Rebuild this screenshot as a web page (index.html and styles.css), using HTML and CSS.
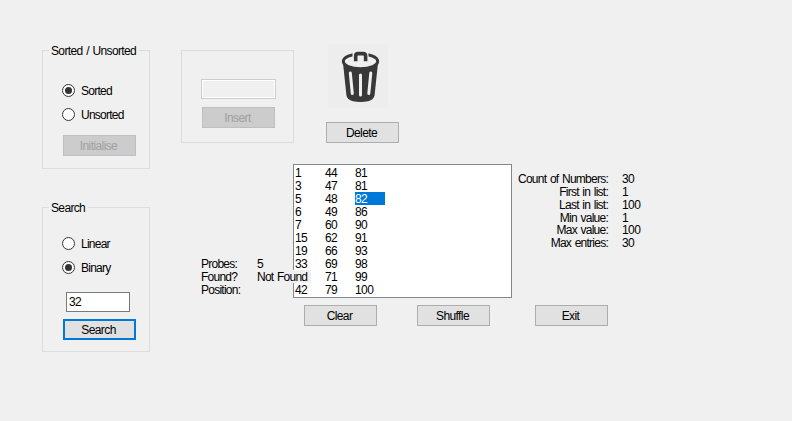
FILE: index.html
```html
<!DOCTYPE html>
<html lang="en">
<head>
<meta charset="utf-8">
<title>Search and Sort</title>
<link rel="stylesheet" href="styles.css">
</head>
<body>
<main class="form">
  <div class="sidebar">
    <section class="group group-sort">
      <h2 class="legend">Sorted / Unsorted</h2>
      <div class="radio"><span class="dot on"></span><span class="caption">Sorted</span></div>
      <div class="radio"><span class="dot"></span><span class="caption">Unsorted</span></div>
      <button class="btn" disabled>Initialise</button>
    </section>
    <section class="group group-search">
      <h2 class="legend">Search</h2>
      <div class="radio"><span class="dot"></span><span class="caption">Linear</span></div>
      <div class="radio"><span class="dot on"></span><span class="caption">Binary</span></div>
      <div class="field">32</div>
      <button class="btn default">Search</button>
    </section>
  </div>
  <div class="content">
    <div class="top">
      <section class="group group-insert">
        <div class="field disabled"></div>
        <button class="btn" disabled>Insert</button>
      </section>
      <div class="delete">
        <div class="bin">
          <svg width="60" height="64" viewBox="0 0 60 64">
            <defs>
              <pattern id="weave" width="3" height="3" patternUnits="userSpaceOnUse">
                <path d="M0 3L3 0" stroke="#eaeaea" stroke-width=".7"/>
              </pattern>
            </defs>
            <rect width="60" height="64" fill="#eeeeee"/>
            <rect width="60" height="64" fill="url(#weave)"/>
            <path d="M15 19L18.400 51Q19 56 25 57.200Q32.500 58.600 40 57.200Q46 56 46.600 51L50 19Z" fill="#383838"/>
            <ellipse cx="32.500" cy="17.300" rx="17.200" ry="7.400" fill="#efefef" stroke="#383838" stroke-width="3"/>
            <path d="M24.500 6H40.500V14H24.500Z" fill="#efefef"/>
            <path d="M27.700 17.200V12Q27.700 9.600 30 9.600H35Q37.600 9.600 37.600 12V17.200" fill="none" stroke="#383838" stroke-width="3.600"/>
            <path d="M22.300 29L24.300 49.500M32.500 31V51M42.800 29L40.800 49.500" fill="none" stroke="#efefef" stroke-width="3" stroke-linecap="round"/>
          </svg>
        </div>
        <button class="btn">Delete</button>
      </div>
    </div>
    <div class="middle">
      <dl class="result">
        <dt>Probes:</dt><dd>5</dd>
        <dt>Found?</dt><dd><span class="found">Not Found</span></dd>
        <dt>Position:</dt><dd></dd>
      </dl>
      <ul class="list">
        <li>1</li><li>3</li><li>5</li><li>6</li><li>7</li><li>15</li><li>19</li><li>33</li><li></li><li>42</li>
        <li>44</li><li>47</li><li>48</li><li>49</li><li>60</li><li>62</li><li>66</li><li>69</li><li>71</li><li>79</li>
        <li>81</li><li>81</li><li class="selected">82</li><li>86</li><li>90</li><li>91</li><li>93</li><li>98</li><li>99</li><li>100</li>
      </ul>
      <dl class="stats">
        <dt>Count of Numbers:</dt><dd>30</dd>
        <dt>First in list:</dt><dd>1</dd>
        <dt>Last in list:</dt><dd>100</dd>
        <dt>Min value:</dt><dd>1</dd>
        <dt>Max value:</dt><dd>100</dd>
        <dt>Max entries:</dt><dd>30</dd>
      </dl>
    </div>
    <div class="actions">
      <button class="btn">Clear</button>
      <button class="btn">Shuffle</button>
      <button class="btn exit">Exit</button>
    </div>
  </div>
</main>
</body>
</html>
```
FILE: styles.css
```css
* { box-sizing: border-box; }
body {
  margin: 0;
  background: #f0f0f0;
  color: #000;
  font: 12px/13px "Liberation Sans", Arial, sans-serif;
  letter-spacing: -0.75px;
  word-spacing: 1px;
}
h2, dl, dd, ul { margin: 0; padding: 0; font: inherit; }
.form { display: flex; gap: 31px; height: 421px; padding: 50px 0 0 42px; }
.sidebar { display: flex; flex-direction: column; gap: 38px; width: 108px; }
.group { border: 1px solid #dcdcdc; }
.group-sort { height: 119px; padding: 0 0 0 20px; }
.group-search { height: 145px; padding: 0 0 0 20px; }
.legend {
  width: max-content;
  height: 13px;
  margin: -6px 0 0 -14px;
  padding: 0 3px 0 2px;
  background: #f0f0f0;
  letter-spacing: -0.65px;
}
.radio { display: flex; align-items: center; gap: 6px; height: 13px; margin-left: -1px; margin-bottom: 11px; }
.caption { padding-top: 2px; }
.legend + .radio { margin-top: 26px; }
.group-search .legend + .radio { margin-top: 22px; }
.dot { display: grid; place-items: center; width: 13px; height: 13px; border: 1px solid #333; border-radius: 50%; background: #fff; }
.dot.on::before { content: ""; width: 7px; height: 7px; border-radius: 50%; background: #333; }
.btn {
  display: block;
  width: 73px;
  height: 21px;
  padding: 2px 2px 0 0;
  border: 1px solid #adadad;
  background: #e1e1e1;
  color: #000;
  font: inherit;
  line-height: 17px;
  letter-spacing: -0.6px;
  text-align: center;
}
.btn:disabled { border-color: #bfbfbf; background: #ccc; color: #a0a0a0; }
.btn.default { border: 2px solid #0078d7; line-height: 15px; }
.group-sort .btn { margin-top: 14px; }
.field { width: 64px; height: 20px; margin: 18px 0 7px 3px; padding: 3px 2px; border: 1px solid #7a7a7a; background: #fff; letter-spacing: -0.6px; }
.field.disabled { width: 75px; margin: 0 0 8px -1px; border-color: #ccc; background: #f0f0f0; box-shadow: inset 0 0 0 1px #fff; }
.top { display: flex; gap: 32px; height: 93px; }
.group-insert { width: 113px; padding: 28px 0 0 20px; }
.delete { margin-top: -6px; }
.bin { width: 60px; height: 64px; margin: 0 0 14px 2px; }
.bin svg { display: block; }
.middle { display: flex; margin-top: 21px; }
.result { display: grid; grid-template-columns: 56px 56px; grid-auto-rows: 13px; align-self: end; width: 92px; margin: 0 0 2px 20px; }
.result dt, .result .found, .result dd { height: 13px; line-height: 14px; }
.found { position: relative; z-index: 1; display: block; width: 54px; background: #f0f0f0; white-space: nowrap; }
.list {
  display: grid;
  grid-auto-flow: column;
  grid-template-rows: repeat(10, 13px);
  grid-template-columns: repeat(3, 30px);
  width: 219px;
  height: 134px;
  padding: 1px;
  border: 1px solid #828790;
  background: #fff;
  letter-spacing: -0.6px;
  list-style: none;
}
.list li { height: 13px; line-height: 14px; }
.list .selected { background: #0078d7; color: #fff; }
.stats { display: grid; grid-template-columns: 96px auto; column-gap: 14px; grid-template-rows: 13px 13px 13px 12px 13px 13px; margin-top: 9px; }
.stats dt { text-align: right; }
.stats dd { letter-spacing: -0.6px; }
.actions { display: flex; gap: 40px; margin: 7px 0 0 123px; }
.exit { margin-left: 5px; }
```
